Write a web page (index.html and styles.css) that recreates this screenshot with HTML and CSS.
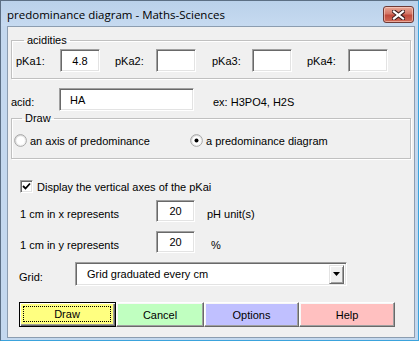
FILE: index.html
```html
<!DOCTYPE html>
<html lang="en">
<head>
    <meta charset="UTF-8">
    <title>predominance diagram - Maths-Sciences</title>
    <link rel="stylesheet" href="styles.css">
</head>
<body>
    <div class="window">
        <div class="titlebar">
            <span class="title">predominance diagram - Maths-Sciences</span>
            <button class="close-btn" aria-label="Close">
                <svg width="13" height="10" viewBox="0 0 13 10">
                    <path d="M2 1.5 L11 8.5 M11 1.5 L2 8.5" stroke="#3b1d1d" stroke-width="4.2" stroke-linecap="square"/>
                    <path d="M2 1.5 L11 8.5 M11 1.5 L2 8.5" stroke="#ffffff" stroke-width="2.2" stroke-linecap="square"/>
                </svg>
            </button>
        </div>

        <div class="client">
            <fieldset class="group acidities">
                <legend>acidities</legend>
                <div class="pka-grid">
                    <label class="pka-label first">pKa1:</label>
                    <input class="field center" type="text" value="4.8">
                    <label class="pka-label">pKa2:</label>
                    <input class="field center" type="text" value="">
                    <label class="pka-label wide">pKa3:</label>
                    <input class="field center" type="text" value="">
                    <label class="pka-label">pKa4:</label>
                    <input class="field center" type="text" value="">
                </div>
            </fieldset>

            <div class="acid-row">
                <label class="low-label acid-label">acid:</label>
                <input class="field acid-field" type="text" value="HA">
                <span class="low-label hint">ex: H3PO4, H2S</span>
            </div>

            <fieldset class="group draw-group">
                <legend>Draw</legend>
                <div class="radio-row">
                    <span class="radio-item first">
                        <svg class="radio" width="13" height="13" viewBox="0 0 13 13">
                            <defs>
                                <linearGradient id="rg1" x1="0" y1="0" x2="1" y2="1">
                                    <stop offset="0" stop-color="#cfcfcf"/>
                                    <stop offset="1" stop-color="#ffffff"/>
                                </linearGradient>
                            </defs>
                            <circle cx="6.5" cy="6.5" r="5.9" fill="url(#rg1)" stroke="#a9a9a9" stroke-width="1"/>
                            <circle cx="6.5" cy="6.5" r="4.2" fill="#ffffff"/>
                        </svg>
                        an axis of predominance
                    </span>
                    <span class="radio-item second">
                        <svg class="radio" width="13" height="13" viewBox="0 0 13 13">
                            <defs>
                                <linearGradient id="rg2" x1="0" y1="0" x2="1" y2="1">
                                    <stop offset="0" stop-color="#cfcfcf"/>
                                    <stop offset="1" stop-color="#ffffff"/>
                                </linearGradient>
                            </defs>
                            <circle cx="6.5" cy="6.5" r="5.9" fill="url(#rg2)" stroke="#a9a9a9" stroke-width="1"/>
                            <circle cx="6.5" cy="6.5" r="4.2" fill="#ffffff"/>
                            <circle cx="6.5" cy="6.5" r="2" fill="#000000"/>
                        </svg>
                        a predominance diagram
                    </span>
                </div>
            </fieldset>

            <div class="check-row">
                <span class="checkbox">
                    <svg width="9" height="9" viewBox="0 0 9 9">
                        <path d="M1 4 L3.5 6.5 L8 1.5" fill="none" stroke="#000" stroke-width="1.8"/>
                    </svg>
                </span>
                <span>Display the vertical axes of the pKai</span>
            </div>

            <div class="scale-row">
                <span class="low-label scale-label">1 cm in x represents</span>
                <input class="field center scale-field" type="text" value="20">
                <span class="low-label unit">pH unit(s)</span>
            </div>

            <div class="scale-row second-scale">
                <span class="low-label scale-label">1 cm in y represents</span>
                <input class="field center scale-field" type="text" value="20">
                <span class="low-label unit percent">%</span>
            </div>

            <div class="grid-row">
                <span class="low-label grid-label">Grid:</span>
                <div class="combo">
                    <span class="combo-text">Grid graduated every cm</span>
                    <span class="combo-btn">
                        <svg width="7" height="4" viewBox="0 0 7 4"><path d="M0 0 H7 L3.5 4 Z" fill="#000"/></svg>
                    </span>
                </div>
            </div>

            <div class="buttons">
                <button class="btn btn-draw"><span class="focus">Draw</span></button>
                <button class="btn btn-cancel">Cancel</button>
                <button class="btn btn-options">Options</button>
                <button class="btn btn-help">Help</button>
            </div>
        </div>
    </div>
</body>
</html>
```

FILE: styles.css
```css
* {
    box-sizing: border-box;
}

body {
    margin: 0;
    padding: 0;
    font-family: "Liberation Sans", Arial, sans-serif;
    font-size: 11px;
    color: #000;
    background: #ffffff;
}

.window {
    width: 419px;
    height: 341px;
    display: flex;
    flex-direction: column;
    background: #c4d8ee;
    border: 1px solid #5c6f84;
    border-right-color: #3ba3dc;
    border-bottom-color: #3ba3dc;
}

.titlebar {
    height: 25px;
    display: flex;
    align-items: center;
    justify-content: space-between;
    padding: 0 4px 0 6px;
    background: linear-gradient(#bad1ea, #c6daf0);
}

.title {
    font-family: "Open Sans", "Noto Sans", sans-serif;
    font-size: 11.5px;
    color: #000;
    margin-top: 1px;
}

.close-btn {
    width: 31px;
    height: 17px;
    margin-top: 2px;
    padding: 0;
    display: flex;
    align-items: center;
    justify-content: center;
    border: 1px solid #6e3a36;
    border-radius: 3px;
    background: linear-gradient(#e8a796 0%, #d47666 45%, #c04a3c 55%, #d06a56 100%);
    box-shadow: inset 0 0 0 1px rgba(255, 220, 210, 0.55);
}

.client {
    flex: 1;
    margin: 0 3px 2px 6px;
    border: 1px solid #8c9db0;
    background: #f0f0f0;
    padding: 7px 3px 0 3px;
}

/* group boxes */
.group {
    margin: 0;
    padding: 2px 4px 6px 4px;
    border: 1px solid #c0c0c0;
    box-shadow: inset 1px 1px #ffffff, 1px 1px #ffffff;
    min-width: 0;
}

.group legend {
    margin-left: 8px;
    padding: 0 3px;
    line-height: 13px;
}

.pka-grid {
    display: grid;
    grid-template-columns: 44px 40px 56px 40px 56px 40px 56px 40px;
    align-items: center;
}

.pka-label {
    padding-left: 15px;
}

.pka-label.first {
    padding-left: 0;
}

.pka-label.wide {
    padding-left: 16px;
}

/* sunken text fields */
.field {
    height: 23px;
    margin: 0;
    padding: 0;
    font-family: "Liberation Sans", Arial, sans-serif;
    font-size: 11px;
    color: #000;
    background: #ffffff;
    border: 1px solid;
    border-color: #a0a0a0 #ffffff #ffffff #a0a0a0;
    box-shadow: inset 1px 1px #696969, inset -1px -1px #e3e3e3;
    outline: none;
}

.field.center {
    text-align: center;
}

.low-label {
    margin-top: 5px;
}

.acid-row {
    display: flex;
    align-items: center;
    margin-top: 9px;
    padding-left: 0;
}

.acid-label {
    width: 48px;
}

.acid-field {
    width: 135px;
    padding-left: 10px;
}

.hint {
    margin-left: 19px;
}

.draw-group {
    margin-top: 1px;
    padding: 9px 2px 11px 2px;
}

.radio-row {
    display: flex;
    align-items: center;
    height: 13px;
}

.radio-item {
    display: flex;
    align-items: center;
    gap: 3px;
}

.radio-item.first {
    width: 176px;
}

.check-row {
    display: flex;
    align-items: center;
    gap: 4px;
    margin-top: 21px;
    margin-left: 9px;
}

.checkbox {
    width: 13px;
    height: 13px;
    display: flex;
    align-items: center;
    justify-content: center;
    background: #ffffff;
    border: 1px solid;
    border-color: #a0a0a0 #ffffff #ffffff #a0a0a0;
    box-shadow: inset 1px 1px #696969, inset -1px -1px #e3e3e3;
}

.scale-row {
    display: flex;
    align-items: center;
    margin-top: 7px;
    margin-left: 9px;
}

.scale-row.second-scale {
    margin-top: 9px;
}

.scale-label {
    width: 136px;
}

.scale-field {
    width: 39px;
    height: 22px;
}

.unit {
    margin-left: 12px;
}

.unit.percent {
    margin-left: 16px;
}

.grid-row {
    display: flex;
    align-items: center;
    margin-top: 9px;
    margin-left: 8px;
}

.grid-label {
    width: 56px;
}

.combo {
    width: 272px;
    height: 24px;
    display: flex;
    align-items: center;
    justify-content: space-between;
    padding: 0 2px 0 11px;
    background: #ffffff;
    border: 1px solid;
    border-color: #a0a0a0 #ffffff #ffffff #a0a0a0;
    box-shadow: inset 1px 1px #696969, inset -1px -1px #e3e3e3;
}

.combo-btn {
    width: 15px;
    height: 19px;
    display: flex;
    align-items: center;
    justify-content: center;
    background: #f0f0f0;
    border: 1px solid;
    border-color: #e3e3e3 #696969 #696969 #e3e3e3;
    box-shadow: inset 1px 1px #ffffff, inset -1px -1px #a0a0a0;
}

/* command buttons */
.buttons {
    display: flex;
    margin-top: 16px;
    margin-left: 8px;
}

.btn {
    height: 25px;
    padding: 0;
    font-family: "Liberation Sans", Arial, sans-serif;
    font-size: 11px;
    color: #000;
    border: 1px solid;
    border-color: #ffffff #696969 #696969 #ffffff;
    box-shadow: inset -1px -1px #a0a0a0, inset 1px 1px #f8f8f8;
}

.btn-draw {
    width: 97px;
    background: #ffff80;
    border: 1px solid #000;
    box-shadow: inset 1px 1px #ffffff, inset -1px -1px #696969, inset -2px -2px #a0a0a0;
    padding: 3px 4px 4px 3px;
}

.focus {
    display: flex;
    align-items: center;
    justify-content: center;
    height: 100%;
    border: 1px dotted #000;
}

.btn-cancel {
    width: 88px;
    background: #c0ffc0;
}

.btn-options {
    width: 95px;
    background: #c0c0ff;
}

.btn-help {
    width: 96px;
    background: #ffc0c0;
}
```
